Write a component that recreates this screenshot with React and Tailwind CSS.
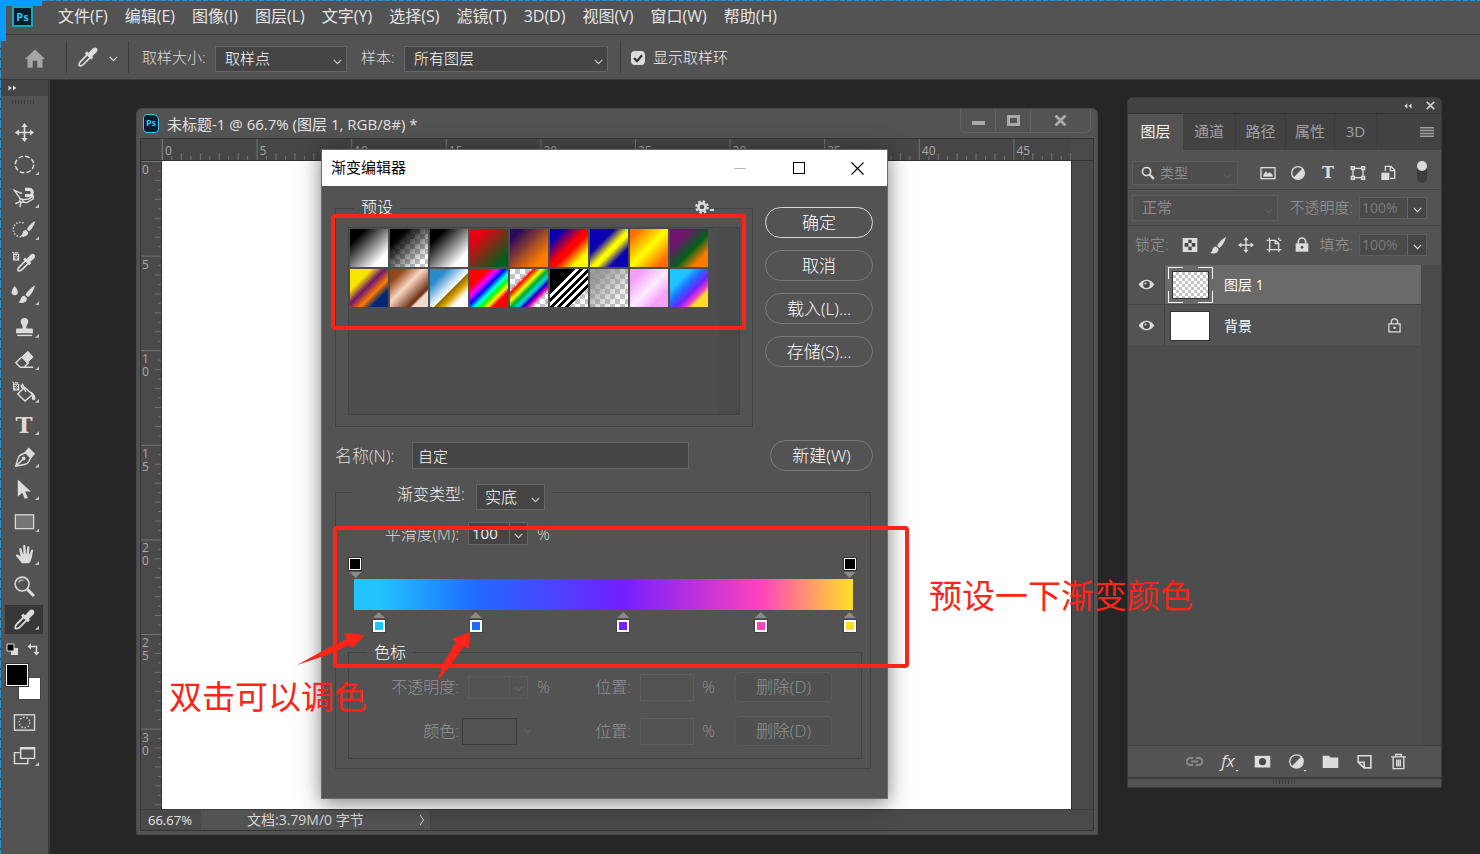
import React, { useState } from 'react'
import clsx from 'clsx'

const checker = 'bg-white bg-[conic-gradient(#c4c4c4_25%,#fff_0_50%,#c4c4c4_0_75%,#fff_0)]'

const menus = ['文件(F)', '编辑(E)', '图像(I)', '图层(L)', '文字(Y)', '选择(S)', '滤镜(T)', '3D(D)', '视图(V)', '窗口(W)', '帮助(H)']

const presets = [
  { name: 'foreground-background', fill: 'bg-[linear-gradient(135deg,#000_20%,#fff_80%)]' },
  { name: 'foreground-transparent', fill: 'bg-[linear-gradient(135deg,#000_22%,#0000_85%)]' },
  { name: 'black-white', fill: 'bg-[linear-gradient(135deg,#000_20%,#fff_80%)]' },
  { name: 'red-green', fill: 'bg-[linear-gradient(135deg,#e60012_20%,#00601b_85%)]' },
  { name: 'violet-orange', fill: 'bg-[linear-gradient(135deg,#290a59_15%,#ff7c00_80%)]' },
  { name: 'blue-red-yellow', fill: 'bg-[linear-gradient(135deg,#0a00b2_18%,#ff0000_48%,#ff0000_56%,#fffc00_80%)]' },
  { name: 'blue-yellow-blue', fill: 'bg-[linear-gradient(135deg,#0a00b2_32%,#fffc00_52%,#fffc00_58%,#0a00b2_76%)]' },
  { name: 'orange-yellow-orange', fill: 'bg-[linear-gradient(135deg,#ff6e02_12%,#ffff00_50%,#ff6d00_85%)]' },
  { name: 'violet-green-orange', fill: 'bg-[linear-gradient(135deg,#6f156c_26%,#00601b_56%,#fd7c00_80%)]' },
  { name: 'yellow-violet-orange-blue', fill: 'bg-[linear-gradient(135deg,#f9e600_28%,#6f156c_46%,#fd7c00_63%,#002874_78%)]' },
  { name: 'copper', fill: 'bg-[linear-gradient(135deg,#97461a_18%,#fbd8c5_44%,#6c2e16_75%,#efdbcd_80%)]' },
  { name: 'chrome', fill: 'bg-[linear-gradient(135deg,#298acc_22%,#fff_54%,#906a00_56%,#d99f00_66%,#fff_80%)]' },
  { name: 'spectrum', fill: 'bg-[linear-gradient(135deg,#f00_24%,#f0f_36%,#00f_46%,#0ff_56%,#0f0_64%,#ff0_72%,#f00_80%)]' },
  { name: 'transparent-rainbow', fill: 'bg-[linear-gradient(135deg,#f000_27%,#f00_32%,#ff0_42%,#0a3_51%,#0dd_60%,#00c_67%,#e0a_74%,#f0a0_80%)]' },
  { name: 'stripes', fill: 'bg-[linear-gradient(135deg,#000_34%,#fff_34%,#fff_39%,#000_39%,#000_44%,#fff_44%,#fff_49%,#000_49%,#000_54%,#fff_54%,#fff_59%,#000_59%,#000_64%,#fff_64%,#fff_69%,#000_69%,#000_74%,#fff0_74%)]' },
  { name: 'neutral', fill: 'bg-[linear-gradient(135deg,#8f8f8fe0_20%,#8f8f8f00_85%)]' },
  { name: 'pink', fill: 'bg-[linear-gradient(135deg,#f4a0f8_18%,#fdebff_52%,#f7a0ff_78%)]' },
  { name: 'custom', fill: 'bg-[linear-gradient(135deg,#21c4ff_27%,#1f6bff_44%,#731fff_59%,#ff42bd_72%,#ffdc2b_78%)]' },
]

const colorStops = [
  { at: 5, color: '#21c4ff' },
  { at: 24.4, color: '#1f6bff' },
  { at: 54, color: '#731fff' },
  { at: 81.5, color: '#ff42bd' },
  { at: 99.3, color: '#ffdc2b' },
]

const opacityStops = [0.3, 99.3]

function Svg({ size = 24, className, children }) {
  return (
    <svg width={size} height={size} viewBox="0 0 24 24" fill="none" className={clsx('shrink-0', className)} aria-hidden="true">
      {children}
    </svg>
  )
}

function Chevron({ className }) {
  return (
    <svg width="9" height="6" viewBox="0 0 9 6" fill="none" stroke="currentColor" strokeWidth="1.2" className={clsx('shrink-0', className)} aria-hidden="true">
      <path d="M0.8 0.8l3.7 3.9 3.7-3.9" />
    </svg>
  )
}

function DropperShape() {
  return (
    <g>
      <path d="M12.500 7.500l4-4.200c1.500-1.600 3.600-2.300 5-1s.9 3.500-.7 5l-4.200 3.900 1.200 1.300-2.300 2.300-7-6.700 2.200-2.300z" fill="currentColor" />
      <path d="M11.300 9.500l-7.200 7.200c-1.200 1.200-2.300 3.600-1.500 4.500s3.300-.1 4.500-1.300l7.200-7.200" stroke="currentColor" strokeWidth="1.900" />
    </g>
  )
}

function BrushShape() {
  return (
    <g fill="currentColor">
      <path d="M23 2.500c-4 2-8.500 6.500-10 9.800l2.600 2.400C18.800 12.500 22 7 23 2.500z" />
      <path d="M12 13.200c-2-.2-3.600 1.200-4 3.300-.3 1.800-1.200 3-2.500 3.700 3.500 1.300 8.800.8 9.200-4.400z" />
    </g>
  )
}

function MoveShape() {
  return <path fill="currentColor" d="M12 2l3.200 4.200h-2.300v4.900h4.900V8.800L22 12l-4.200 3.200v-2.300h-4.900v4.900h2.300L12 22l-3.200-4.200h2.300v-4.900H6.200v2.300L2 12l4.200-3.200v2.300h4.900V6.200H8.800z" />
}

function MiniChecker() {
  return (
    <g transform="translate(-1.500 -1)">
      <path d="M1 2l2 2M3.500 3H7" stroke="currentColor" strokeWidth="1.200" />
      <rect x="1.500" y="4" width="6.500" height="7" fill="currentColor" />
      <path d="M3 5h1.200v1.200H3zM5.400 5h1.200v1.200H5.400zM4.200 6.200h1.200v1.200H4.200zM3 7.400h1.200v1.200H3zM5.400 7.400h1.200v1.200H5.400zM4.200 8.600h1.200v1.200H4.200z" fill="#333" />
    </g>
  )
}

const tools = [
  { name: '移动工具', art: <MoveShape /> },
  { name: '椭圆选框工具', more: true, art: <ellipse cx="12" cy="12" rx="9.600" ry="8.600" stroke="currentColor" strokeWidth="1.500" strokeDasharray="5 2.200" /> },
  {
    name: '磁性套索工具', more: true, art: (
      <g stroke="currentColor" strokeWidth="1.500">
        <path d="M8.500 14.500L1.500 4.500l8 3.500M9.500 14.500l6.500-1 5-3v3l-7 4-4-1M8 16l-5.500 2.500M8.500 17L7 22" />
        <circle cx="8.800" cy="15.300" r="1.700" fill="#535353" />
        <path d="M12.500 3.500h4.500a3.200 3.200 0 0 1 0 6.400h-4.500" strokeWidth="3.200" />
      </g>
    ),
  },
  {
    name: '快速选择工具', more: true, art: (
      <g>
        <path d="M11 5.200a7.500 7.500 0 1 0 1 13" stroke="currentColor" strokeWidth="1.600" strokeDasharray="1.400 1.800" />
        <g transform="translate(3 1) scale(.88)"><BrushShape /></g>
      </g>
    ),
  },
  { name: '背景吸管工具', art: <g><MiniChecker /><g transform="translate(3 1.500) scale(.9)"><DropperShape /></g></g> },
  {
    name: '混合器画笔工具', more: true, art: (
      <g>
        <path d="M-1.500 9.500c0-2.500 3.300-6.500 3.300-6.500s3.300 4 3.300 6.500a3.300 3.300 0 0 1-6.600 0z" fill="currentColor" />
        <BrushShape />
      </g>
    ),
  },
  {
    name: '仿制图章工具', more: true, art: (
      <g fill="currentColor">
        <path d="M12 2a4 4 0 0 1 4 4c0 2-2 3-2 5.500v1.500h5.500c.8 0 1.300.5 1.300 1.300V18H3.200v-3.700c0-.8.5-1.300 1.300-1.300H10v-1.500C10 9 8 8 8 6a4 4 0 0 1 4-4z" />
        <path d="M4.500 19.500h15.500V21h-15.500z" />
      </g>
    ),
  },
  {
    name: '橡皮擦工具', more: true, art: (
      <g>
        <path d="M15.500 3.500L21 9.500 14.500 15.500 9 9.500z" fill="currentColor" stroke="currentColor" />
        <path d="M9 9.500l-6 6 4.500 4.500h4l5-5M7.500 20H21" stroke="currentColor" strokeWidth="1.500" />
      </g>
    ),
  },
  {
    name: '油漆桶工具', more: true, art: (
      <g>
        <MiniChecker />
        <path d="M12 6.500l8.500 7.500-8 7-7.500-7.500z" stroke="currentColor" strokeWidth="1.500" />
        <path d="M13.500 11.500L10 3.500 8.500 5l2 4" stroke="currentColor" strokeWidth="1.500" />
        <path d="M18.500 11c2.800 1.500 5 4.200 5 7.300a1.900 1.900 0 0 1-3.800 0c0-1.800.3-3.300-.7-5z" fill="currentColor" />
      </g>
    ),
  },
  { name: '文字工具', more: true, letter: 'T' },
  {
    name: '钢笔工具', more: true, art: (
      <g stroke="currentColor" strokeWidth="1.500">
        <path d="M3 21c1-4 1.500-7.500 3.500-10.500C8.500 8.500 11.500 8 13.500 7l5 5c-1 2.500-1.700 5-4 6.500-3 1.500-7.500 1.500-11.500 2.500z" />
        <path d="M13 6.500l3.500-3.800 5.500 5.500-3.500 4z" fill="currentColor" />
        <path d="M3 21l7.500-7.500" />
        <circle cx="11" cy="13" r="1.200" fill="currentColor" />
      </g>
    ),
  },
  { name: '路径选择工具', more: true, art: <path d="M5 1.500v18l4.600-4.200L12.500 22l3-1.300-2.900-6.500 6-.2z" fill="currentColor" /> },
  { name: '矩形工具', more: true, art: <rect x="2.500" y="5" width="19" height="14.500" fill="#757575" stroke="currentColor" strokeWidth="1.300" /> },
  {
    name: '抓手工具', more: true, art: (
      <path
        fill="currentColor"
        d="M9.500 21c-1.800-1.500-3-4-5-6-1-1-1.800-1.800-1.200-2.600.7-.9 2-.4 3 .5l1.600 1.400L6.600 6.800c-.3-1.800 1.900-2.200 2.300-.5l1.400 5h.6L10.600 3.600c0-1.900 2.300-1.900 2.400 0l.5 7.400h.6l.7-6.500c.3-1.700 2.500-1.400 2.300.3l-.5 6.900h.6l1.600-4.200c.6-1.500 2.500-.8 2.100.8-.8 3.400-1 5.500-1.600 8-.5 2-1.300 3.300-2.300 4.700z"
      />
    ),
  },
  {
    name: '缩放工具', art: (
      <g stroke="currentColor">
        <circle cx="9.500" cy="9.500" r="7.300" strokeWidth="1.600" />
        <path d="M6 8a4 4 0 0 1 5-2.500" strokeWidth="1.200" />
        <path d="M15 15l6.800 6.800" strokeWidth="3" />
      </g>
    ),
  },
  { name: '吸管工具', more: true, active: true, art: <DropperShape /> },
]

const filters = [
  { name: '像素图层', art: <g><rect x="1.500" y="4" width="21" height="16.500" stroke="currentColor" strokeWidth="2" /><path d="M5 17.500v-3l4-5 3 4 2.500-3 4.500 4.500v2.500z" fill="currentColor" /></g> },
  { name: '调整图层', art: <g><circle cx="12" cy="12" r="9.500" stroke="currentColor" strokeWidth="2" /><path d="M5.300 18.700A9.500 9.500 0 0 0 18.700 5.300z" fill="currentColor" /></g> },
  { name: '文字图层', letter: 'T' },
  {
    name: '形状图层', art: (
      <g>
        <rect x="4.500" y="5" width="15" height="14" stroke="currentColor" strokeWidth="2" />
        <path d="M1 1.500h6.500V8H1zM16.500 1.500H23V8h-6.500zM1 16h6.500v6.500H1zM16.500 16H23v6.500h-6.500z" fill="currentColor" />
        <path d="M3.300 3.800h2v2h-2zM18.700 3.800h2v2h-2zM3.300 18.200h2v2h-2zM18.700 18.200h2v2h-2z" fill="#535353" />
      </g>
    ),
  },
  { name: '智能对象', art: <g><path d="M8 9V2h8.500L22 7.500V20h-7" stroke="currentColor" strokeWidth="2" /><path d="M15.500 2v6.500H22" stroke="currentColor" strokeWidth="2" /><path d="M2 11.500h12v11H2z" fill="currentColor" /></g> },
]

const locks = [
  {
    name: '锁定透明像素', art: (
      <g>
        <rect x="1" y="1.500" width="22" height="21" fill="currentColor" />
        <path d="M9.500 4h5v5h-5zM4 9h5.500v5.500H4zM14.500 9H20v5.500h-5.500zM9.500 14.500h5V20h-5z" fill="#444" />
      </g>
    ),
  },
  { name: '锁定图像像素', art: <g transform="translate(-7 -3.500) scale(1.350)"><BrushShape /></g> },
  { name: '锁定位置', art: <g transform="translate(-2.400 -2.400) scale(1.200)"><MoveShape /></g> },
  { name: '锁定画板', art: <g stroke="currentColor" strokeWidth="2"><path d="M5 1v3M1 5h3M5.500 5H14l5 4.500V19H5.500zM19 1v3M23 5h-3M19 20v3M20 19h3M5 20v3M1 19h3" /><path d="M14 5v5h5" /></g> },
  { name: '锁定全部', art: <g><path d="M6.500 10V7a5.500 5.500 0 0 1 11 0v3" stroke="currentColor" strokeWidth="2.400" /><path d="M2.500 9.500h19V22h-19z" fill="currentColor" /><circle cx="12" cy="15.500" r="2" fill="#444" /></g> },
]

const footer = [
  { name: '链接图层', dim: true, art: <g stroke="currentColor" strokeWidth="2.600"><path d="M10 7H6a5 5 0 0 0 0 10h4M14 7h4a5 5 0 0 1 0 10h-4M7 12h10" /></g> },
  { name: '图层样式', letter: 'fx', more: true },
  { name: '添加蒙版', art: <g><path d="M1 4h22v16.500H1z" fill="currentColor" /><circle cx="12" cy="12.200" r="5" fill="#484848" /></g> },
  { name: '新建调整图层', more: true, art: <g><circle cx="12" cy="12" r="9.500" stroke="currentColor" strokeWidth="1.800" /><path d="M5.300 18.700A9.500 9.500 0 0 0 18.700 5.300z" fill="currentColor" /></g> },
  { name: '新建组', art: <path d="M1 4h9l2 2.500h11V21H1z" fill="currentColor" /> },
  { name: '新建图层', art: <path d="M3 4h18v17h-9.500L3 13zM3 13h8.500v8" stroke="currentColor" strokeWidth="2.200" /> },
  { name: '删除图层', art: <g stroke="currentColor" strokeWidth="2"><path d="M1.500 5.500h21M8 5V2h8v3M4.500 6v16h15V6M9.500 9v10M14.500 9v10M12 9v10" /></g> },
]

function Corner() {
  return <span className="absolute bottom-1 right-1 h-1 w-1 bg-[#c4c4c4] [clip-path:polygon(100%_0,100%_100%,0_100%)]" />
}

function MenuBar() {
  return (
    <nav className="flex h-[35px] items-center border-b border-[#3a3a3a] pb-[2px] pl-3">
      <div className="mr-[25px] flex h-[21px] w-[21px] items-center justify-center border-2 border-[#1ba6bb] bg-[#001e2b] text-[11px] font-bold leading-none text-[#31c5f0]">
        Ps
      </div>
      <div className="flex gap-[17px] text-base leading-6 text-[#e6e6e6]">
        {menus.map((menu) => (
          <button key={menu} type="button" className="whitespace-nowrap">{menu}</button>
        ))}
      </div>
    </nav>
  )
}

function Dropdown({ id, value, className, wrapper, chevron, disabled }) {
  return (
    <div className={clsx('relative shrink-0 border', wrapper)}>
      <select id={id} disabled={disabled} defaultValue={value} aria-label={value} className={clsx('block h-full w-full appearance-none bg-transparent outline-none disabled:opacity-100', className)}>
        <option>{value}</option>
      </select>
      <Chevron className={clsx('pointer-events-none absolute right-1 top-1/2', chevron)} />
    </div>
  )
}

function OptionsBar() {
  const [ring, setRing] = useState(true)

  return (
    <div className="flex h-[45px] items-center whitespace-nowrap border-b border-[#3a3a3a] text-[15px] font-light text-[#dcdcdc]">
      <button type="button" aria-label="主页" className="ml-6 mt-1 text-[#a5a5a5]">
        <Svg size={22}>
          <path d="M12 1.500l11 10.500h-2.800v9.500h-5.700V14h-5v7.500H3.800V12H1z" fill="currentColor" />
        </Svg>
      </button>
      <span className="ml-5 h-8 w-px bg-[#3d3d3d]" />
      <button type="button" aria-label="吸管工具" className="ml-[10px] flex items-center gap-[10px] text-[#dcdcdc]">
        <Svg size={22}><DropperShape /></Svg>
        <Chevron className="mt-1" />
      </button>
      <span className="ml-[10px] h-8 w-px bg-[#3d3d3d]" />
      <label htmlFor="sample-size" className="ml-[13px] w-[73px]">取样大小:</label>
      <Dropdown id="sample-size" value="取样点" wrapper="mt-[3px] h-[26px] w-[132px] border-[#666] bg-[#454545] text-white" className="pl-[9px]" chevron="text-[#c8c8c8]" />
      <label htmlFor="sample-from" className="ml-[14px] w-[43px]">样本:</label>
      <Dropdown id="sample-from" value="所有图层" wrapper="mt-[3px] h-[26px] w-[204px] border-[#666] bg-[#454545] text-white" className="pl-[9px]" chevron="text-[#c8c8c8]" />
      <span className="ml-3 h-8 w-px bg-[#3d3d3d]" />
      <span className="relative ml-[10px] mt-[2px] h-[14px] w-[14px]">
        <input id="ring" type="checkbox" checked={ring} onChange={(e) => setRing(e.target.checked)} className="block h-[14px] w-[14px] appearance-none rounded-sm bg-[#dcdcdc]" />
        {ring && (
          <svg width="14" height="14" viewBox="0 0 14 14" fill="none" className="pointer-events-none absolute inset-0">
            <path d="M3 7l3 3.200 5-6" stroke="#333" strokeWidth="2.200" />
          </svg>
        )}
      </span>
      <label htmlFor="ring" className="ml-2 text-[#f0f0f0]">显示取样环</label>
    </div>
  )
}

function ToolBar() {
  return (
    <aside className="w-[50px] shrink-0 border-r-2 border-[#3a3a3a] bg-[#535353] text-[#dcdcdc]">
      <div className="flex h-4 items-center bg-[#444] pl-2">
        <svg width="9" height="6" viewBox="0 0 9 6" fill="currentColor"><path d="M0.500 0.500L3.800 3 0.500 5.500zM5 0.500L8.300 3 5 5.500z" /></svg>
      </div>
      <div className="mx-auto mb-[14px] mt-1 h-[4px] w-6 bg-[repeating-linear-gradient(90deg,#3e3e3e_0,#3e3e3e_1px,#535353_1px,#535353_3px)]" />
      <div className="flex h-[516px] flex-col items-center justify-between">
        {tools.map((tool) => (
          <button
            key={tool.name}
            type="button"
            aria-label={tool.name}
            className={clsx('relative flex h-[29px] w-[38px] items-center justify-center', tool.active && 'bg-[#383838]')}
          >
            {tool.letter ? (
              <span className="font-['DejaVu_Serif',serif] text-[23px] font-bold leading-none">{tool.letter}</span>
            ) : (
              <Svg size={23} className="overflow-visible">{tool.art}</Svg>
            )}
            {tool.more && <Corner />}
          </button>
        ))}
      </div>
      <div className="flex items-center justify-between pl-[6px] pr-2 pt-[9px]">
        <button type="button" aria-label="默认颜色">
          <svg width="13" height="13" viewBox="0 0 13 13"><path d="M5 5h7v7H5z" fill="#dcdcdc" /><path d="M1 1h7v7H1z" fill="#000" stroke="#dcdcdc" /></svg>
        </button>
        <button type="button" aria-label="切换颜色">
          <svg width="13" height="13" viewBox="0 0 13 13" fill="none" stroke="currentColor" strokeWidth="1.500"><path d="M3 3.500h6.500v6" /><path d="M4 0.500v6L0.500 3.500zM6.500 9h6L9.500 12.500z" fill="currentColor" stroke="none" /></svg>
        </button>
      </div>
      <div className="relative ml-[6px] mt-2 h-9 w-[35px]">
        <button type="button" aria-label="背景色" className="absolute bottom-0 right-0 h-[23px] w-[23px] border border-[#444] bg-white" />
        <button type="button" aria-label="前景色" className="absolute left-0 top-0 h-[22px] w-[22px] border border-white bg-black outline outline-[#333]" />
      </div>
      <div className="mt-2 flex flex-col items-center gap-1">
        <button type="button" aria-label="快速蒙版" className="relative flex h-[29px] w-[38px] items-center justify-center">
          <Svg size={23}>
            <rect x="1.500" y="4" width="21" height="16" stroke="currentColor" strokeWidth="1.400" />
            <circle cx="12" cy="12" r="5.500" stroke="currentColor" strokeWidth="1.400" strokeDasharray="1.500 1.900" />
          </Svg>
        </button>
        <button type="button" aria-label="屏幕模式" className="relative flex h-[29px] w-[38px] items-center justify-center">
          <Svg size={23}>
            <path d="M7 9H1.500v11.500h14V16" stroke="currentColor" strokeWidth="1.500" />
            <path d="M8 4h14.500v11H8zM8 5h14.500" stroke="currentColor" strokeWidth="1.500" />
          </Svg>
          <Corner />
        </button>
      </div>
    </aside>
  )
}

// rulers count in centimetres, one label every five
const RULER_STEP = 94.6
const marks = Array.from({ length: 120 }, (_, i) => i)
const topLabels = [0, 5, 10, 15, 20, 25, 30, 35, 40, 45]
const leftLabels = [0, 5, 10, 15, 20, 25, 30]

function TopRuler() {
  return (
    <svg width="100%" height="22" className="block flex-1 overflow-hidden" aria-hidden="true">
      {marks.map((i) => {
        const x = (i * RULER_STEP) / 10
        const top = i % 10 === 0 ? 0 : i % 2 === 0 ? 14 : 17
        return <path key={i} d={`M${x + 0.5} ${top}V21`} stroke="#747474" />
      })}
      {topLabels.map((label) => (
        <text key={label} x={(label * RULER_STEP) / 5 + 3} y="16" fontSize="12" fill="#a8a8a8">{label}</text>
      ))}
    </svg>
  )
}

function LeftRuler() {
  return (
    <div className="relative w-[21px] shrink-0 overflow-hidden border-r border-[#333]">
      <svg width="21" height="1140" className="absolute left-0 top-0" aria-hidden="true">
        {marks.map((i) => {
          const y = (i * RULER_STEP) / 10
          const left = i % 10 === 0 ? 0 : i % 2 === 0 ? 14 : 17
          return <path key={i} d={`M${left} ${y + 0.5}H21`} stroke="#747474" />
        })}
      </svg>
      {leftLabels.map((label) => (
        <span
          key={label}
          className="absolute left-px w-2 break-all text-[12px] leading-[13px] text-[#a8a8a8]"
          style={{ top: Math.round((label * RULER_STEP) / 5) + 2 }}
        >
          {label}
        </span>
      ))}
    </div>
  )
}

function DocumentWindow() {
  return (
    <section className="absolute bottom-[19px] left-[86px] right-[382px] top-7 flex flex-col rounded-t-md border border-[#474747] bg-[#535353]">
      <header className="flex h-[29px] items-center pl-[6px]">
        <div className="h-[19px] w-4 rounded-sm rounded-tr-md border border-[#35c8ee] bg-[#001e2b] pt-[3px] text-center text-[9px] font-bold leading-none text-[#31c5f0]">
          Ps
        </div>
        <h1 className="ml-2 whitespace-nowrap text-[15px] leading-5 text-[#e2e2e2]">未标题-1 @ 66.7% (图层 1, RGB/8#) *</h1>
        <div className="ml-auto mr-[6px] flex h-6 self-start rounded-b-md border border-t-0 border-[#626262] text-[#aaa]">
          <button type="button" aria-label="最小化文档" className="flex w-[35px] items-center justify-center border-r border-[#626262]">
            <span className="mt-1 h-1 w-[13px] bg-current" />
          </button>
          <button type="button" aria-label="最大化文档" className="flex w-[35px] items-center justify-center border-r border-[#626262]">
            <span className="h-[11px] w-[13px] border-[3px] border-current" />
          </button>
          <button type="button" aria-label="关闭文档" className="flex w-[59px] items-center justify-center">
            <svg width="13" height="11" viewBox="0 0 13 11" stroke="currentColor" strokeWidth="2.800"><path d="M1.500 0.500l10 10M11.500 0.500l-10 10" /></svg>
          </button>
        </div>
      </header>
      <div className="mx-[3px] mb-[3px] flex flex-1 flex-col border border-[#343434] bg-[#4a4a4a]">
        <div className="flex h-[22px] border-b border-[#333] bg-[#464646]">
          <div className="w-[21px] shrink-0 border-r border-dotted border-[#666]" />
          <TopRuler />
          <div className="w-[22px] shrink-0 bg-[#4a4a4a]" />
        </div>
        <div className="flex min-h-0 flex-1">
          <LeftRuler />
          <div className="flex-1 bg-white" />
          <div className="w-[22px] shrink-0 border-l border-[#333]" />
        </div>
        <footer className="flex h-[21px] items-center border-t border-[#3c3c3c] text-[13px] leading-5 text-[#e6e6e6]">
          <span className="w-[60px] pl-[7px]">66.67%</span>
          <div className="flex h-full w-[230px] items-center justify-between border-r border-[#444] bg-[#535353] pl-[46px] pr-[5px] text-[14px] text-[#d6d6d6]">
            <span>文档:3.79M/0 字节</span>
            <svg width="6" height="12" viewBox="0 0 6 12" fill="none" stroke="currentColor"><path d="M1 1l3.500 5L1 11" /></svg>
          </div>
        </footer>
      </div>
    </section>
  )
}

function PillButton({ children, primary, className }) {
  return (
    <button
      type="button"
      className={clsx(
        'h-[31px] shrink-0 rounded-full border text-[17px] leading-6 text-white',
        primary ? 'border-[#d8d8d8]' : 'border-[#7a7a7a]',
        className
      )}
    >
      {children}
    </button>
  )
}

function PresetList() {
  return (
    <fieldset className="relative min-w-0 flex-1 border border-[#434343] pb-[11px] pl-3 pr-3">
      <legend className="ml-[6px] h-6 px-[7px] leading-[22px] text-white">预设</legend>
      <button type="button" aria-label="预设菜单" className="absolute -top-5 right-[38px] flex items-end gap-px bg-[#535353] text-[#dcdcdc]">
        <svg width="14" height="14" viewBox="0 0 14 14" fill="none" stroke="currentColor">
          <circle cx="7" cy="7" r="3.600" strokeWidth="2.600" />
          <circle cx="7" cy="7" r="5.700" strokeWidth="2.200" strokeDasharray="2.400 2.077" />
        </svg>
        <span className="mb-[3px] h-[2px] w-1 bg-current" />
      </button>
      <div className="mt-[7px] flex h-[188px] border border-[#444] bg-[#4e4e4e]">
        <div className="grid flex-1 grid-cols-[repeat(9,38px)] content-start gap-[2px] pl-px pt-px">
          {presets.map((preset) => (
            <button key={preset.name} type="button" aria-label={preset.name} className={clsx('h-[38px] bg-[length:10px_10px]', checker)}>
              <span className={clsx('block h-full w-full', preset.fill)} />
            </button>
          ))}
        </div>
        <div className="w-5 bg-[#4a4a4a]" />
      </div>
    </fieldset>
  )
}

function NumberField({ id, value, disabled, className }) {
  return (
    <span className={clsx('flex shrink-0 border', disabled ? 'border-[#5c5c5c]' : 'border-[#666] bg-[#454545]', className)}>
      <input id={id} defaultValue={value} disabled={disabled} className="min-w-0 flex-1 bg-transparent pl-[3px] outline-none" />
      <button type="button" aria-label="展开" disabled={disabled} className={clsx('flex w-[18px] items-center justify-center border-l', disabled ? 'border-[#5c5c5c] text-[#666]' : 'border-[#666] text-[#d0d0d0]')}>
        <Chevron className="mt-1" />
      </button>
    </span>
  )
}

function GradientBar() {
  return (
    <div className="mt-[13px] pl-[18px] pr-[17px]">
      <div className="relative h-[21px]">
        {opacityStops.map((at) => (
          <button key={at} type="button" aria-label={`不透明度色标 ${at}%`} className="absolute top-0 -ml-[6px] flex flex-col items-center" style={{ left: `${at}%` }}>
            <span className="h-3 w-3 border border-white bg-black outline outline-[#333]" />
            <span className="mt-[2px] h-[6px] w-3 bg-[#8a8a8a] [clip-path:polygon(0_0,100%_0,50%_100%)]" />
          </button>
        ))}
      </div>
      <div className="h-[31px] bg-[linear-gradient(90deg,#21c4ff_5%,#1f6bff_24.4%,#731fff_54%,#ff42bd_81.5%,#ffdc2b_99.3%)]" />
      <div className="relative mt-[2px] h-5">
        {colorStops.map((stop) => (
          <button key={stop.at} type="button" aria-label={`颜色色标 ${stop.color}`} className="absolute top-0 -ml-[6px] flex flex-col items-center" style={{ left: `${stop.at}%` }}>
            <span className="mb-[2px] h-[6px] w-3 bg-[#8a8a8a] [clip-path:polygon(50%_0,100%_100%,0_100%)]" />
            <span className="h-3 w-3 border-2 border-white outline outline-[#444]" style={{ backgroundColor: stop.color }} />
          </button>
        ))}
      </div>
    </div>
  )
}

function StopRow({ id, label, children, className }) {
  return (
    <div className={clsx('flex h-[30px] items-center', className)}>
      <label htmlFor={id} className="w-[110px] shrink-0 text-right">{label}</label>
      {children}
      <label htmlFor={`${id}-position`} className="w-[45px] shrink-0 text-right">位置:</label>
      <input id={`${id}-position`} disabled className="ml-[9px] h-[27px] w-[54px] border border-[#5f5f5f]" />
      <span className="ml-2 w-[14px]">%</span>
      <button type="button" disabled className="ml-[19px] h-[30px] w-[97px] rounded-sm border border-[#5c5c5c] bg-[#505050] text-[17px] leading-6">删除(D)</button>
    </div>
  )
}

function GradientEditor() {
  return (
    <section className="border border-[#6a6a6a] bg-[#535353] pb-[29px] text-base font-light shadow-[0_4px_20px_rgba(0,0,0,0.5)]">
      <header className="flex h-9 items-center bg-white pl-[9px] font-normal text-black">
        <h2 className="pb-[2px] text-[15px]">渐变编辑器</h2>
        <div className="ml-auto flex h-full">
          <button type="button" aria-label="最小化" className="flex w-[59px] items-center justify-center"><span className="h-px w-3 bg-[#b5b5b5]" /></button>
          <button type="button" aria-label="最大化" className="flex w-[59px] items-center justify-center"><span className="h-3 w-3 border border-black" /></button>
          <button type="button" aria-label="关闭" className="flex w-[59px] items-center justify-center">
            <svg width="13" height="13" viewBox="0 0 13 13" stroke="currentColor" strokeWidth="1.200"><path d="M0.500 0.500l12 12M12.500 0.500l-12 12" /></svg>
          </button>
        </div>
      </header>
      <div className="pl-[13px] pr-[14px] pt-[10px]">
        <div className="flex gap-3">
          <PresetList />
          <div className="flex w-[108px] flex-col gap-3 pt-[11px]">
            <PillButton primary>确定</PillButton>
            <PillButton>取消</PillButton>
            <PillButton>载入(L)...</PillButton>
            <PillButton>存储(S)...</PillButton>
          </div>
        </div>
        <div className="mt-[13px] flex items-center">
          <label htmlFor="gradient-name" className="w-[77px] shrink-0 text-[17px] leading-6 text-[#dcdcdc]">名称(N):</label>
          <input id="gradient-name" defaultValue="自定" className="h-[27px] w-[277px] border border-[#666] bg-[#454545] pl-[5px] text-[15px] text-white outline-none" />
          <PillButton className="ml-auto w-[103px]">新建(W)</PillButton>
        </div>
        <fieldset className="mr-[2px] mt-[13px] min-w-0 border border-[#434343] pb-[9px]">
          <legend className="ml-4 flex h-4 w-[200px] items-start pl-[45px]">
            <label htmlFor="gradient-type" className="w-[79px] shrink-0 leading-5 text-[#f0f0f0]">渐变类型:</label>
            <Dropdown id="gradient-type" value="实底" wrapper="h-[26px] w-[69px] border-[#666] bg-[#454545] text-white" className="pl-2" chevron="text-[#c8c8c8]" />
          </legend>
          <div className="mt-[22px] flex h-[23px] items-center text-[#dcdcdc]">
            <label htmlFor="smoothness" className="w-[132px] pr-[9px] text-right">平滑度(M):</label>
            <NumberField id="smoothness" value="100" className="h-[23px] w-[60px] text-[15px] font-normal text-[#f0f0f0]" />
            <span className="ml-[9px]">%</span>
          </div>
          <GradientBar />
          <fieldset className="ml-3 mr-2 mt-[10px] min-w-0 border border-[#434343] pb-3 text-[#929292]">
            <legend className="ml-[18px] h-5 px-[7px] leading-5 text-white">色标</legend>
            <StopRow id="stop-opacity" label="不透明度:" className="mt-[10px]">
              <div className="flex w-[127px] items-center gap-[9px] pl-[9px]">
                <NumberField id="stop-opacity" disabled className="h-[23px] w-[60px]" />
                <span>%</span>
              </div>
            </StopRow>
            <StopRow id="stop-color" label="颜色:" className="mt-[14px]">
              <div className="flex w-[127px] items-center gap-[6px] pl-[3px]">
                <button id="stop-color" type="button" disabled aria-label="颜色" className="h-[27px] w-[55px] border border-[#3c3c3c]" />
                <Chevron className="text-[#636363]" />
              </div>
            </StopRow>
          </fieldset>
        </fieldset>
      </div>
    </section>
  )
}

function Notes() {
  return (
    <div className="pointer-events-none text-[33px] leading-10 text-[#fb2418]">
      <div className="absolute left-[10px] top-[65px] h-[116px] w-[415px] rounded border-4 border-current" />
      <div className="absolute left-3 top-[377px] h-[142px] w-[576px] rounded border-4 border-current" />
      <svg width="180" height="52" viewBox="0 0 180 52" fill="currentColor" className="absolute -left-6 top-[483px]">
        <path d="M0 33L29 17 50 7 47 1 68 3 55 16 52 13 30 23z" />
        <path d="M140 49L148 28 159 10 155 7 173 0 172 17 167 14 153 34z" />
      </svg>
      <p className="absolute -left-[152px] top-[528px] whitespace-nowrap">双击可以调色</p>
      <p className="absolute left-[608px] top-[427px] whitespace-nowrap">预设一下渐变颜色</p>
    </div>
  )
}

function Eye() {
  return (
    <Svg size={17}>
      <path d="M1 12c5-9 17-9 22 0-5 9-17 9-22 0z" fill="#dcdcdc" />
      <circle cx="12" cy="12" r="4.800" fill="#484848" />
      <circle cx="10.500" cy="10.500" r="1.500" fill="#dcdcdc" />
    </Svg>
  )
}

function PanelField({ id, label }) {
  return (
    <>
      <label htmlFor={id} className="ml-auto mr-[6px] font-light text-[#999]">{label}</label>
      <span className="mr-[14px] flex h-[22px] w-[68px] shrink-0 border border-[#5f5f5f] bg-[#4a4a4a]">
        <input id={id} disabled defaultValue="100%" className="min-w-0 flex-1 pl-[2px] text-[14px] text-[#7a7a7a]" />
        <button type="button" aria-label={`${label}展开`} className="flex w-[19px] items-center justify-center border-l border-[#666] bg-[#454545] text-[#dcdcdc]">
          <Chevron className="mt-1" />
        </button>
      </span>
    </>
  )
}

function LayersPanel() {
  return (
    <section className="absolute bottom-[66px] right-[38px] top-[17px] flex w-[315px] flex-col rounded-t-md border border-[#3a3a3a] bg-[#535353] text-[15px] text-[#dcdcdc]">
      <div className="flex h-4 items-center justify-end gap-[14px] rounded-t-md border-b border-[#333] bg-[#424242] pr-[6px]">
        <svg width="8" height="6" viewBox="0 0 8 6" fill="currentColor"><path d="M3.300 0.500L0.300 3l3 2.500zM7.500 0.500L4.500 3l3 2.500z" /></svg>
        <button type="button" aria-label="关闭面板">
          <svg width="9" height="9" viewBox="0 0 9 9" stroke="#c8c8c8" strokeWidth="1.800"><path d="M0.800 0.800l7.400 7.400M8.200 0.800L0.800 8.200" /></svg>
        </button>
      </div>
      <div className="flex h-9 shrink-0 items-stretch bg-[#424242] text-[#a0a0a0]">
        <button type="button" className="w-[55px] bg-[#535353] pb-[2px] text-[#f4f4f4]">图层</button>
        <button type="button" className="w-[53px] border-r border-[#3b3b3b] pb-[2px]">通道</button>
        <button type="button" className="w-[50px] border-r border-[#3b3b3b] pb-[2px]">路径</button>
        <button type="button" className="w-[49px] border-r border-[#3b3b3b] pb-[2px]">属性</button>
        <button type="button" className="w-[42px] border-r border-[#3b3b3b] pb-[2px]">3D</button>
        <button type="button" aria-label="面板菜单" className="ml-auto mr-[7px] flex items-center">
          <svg width="14" height="10" viewBox="0 0 14 10" stroke="currentColor" strokeWidth="1.500"><path d="M0 0.800h14M0 3.600h14M0 6.400h14M0 9.200h14" /></svg>
        </button>
      </div>
      <div className="flex h-10 shrink-0 items-center border-b border-[#424242] pl-1 pt-[6px]">
        <div className="flex h-6 w-[106px] items-center border border-[#5c5c5c] bg-[#4e4e4e] pl-2">
          <Svg size={14}><circle cx="9.500" cy="9.500" r="7" stroke="currentColor" strokeWidth="2.800" /><path d="M15 15l7 7" stroke="currentColor" strokeWidth="4" /></Svg>
          <Dropdown value="类型" disabled wrapper="h-6 flex-1 border-transparent text-[14px] text-[#8c8c8c]" className="pl-1" chevron="text-[#5e5e5e]" />
        </div>
        <div className="ml-[22px] flex gap-[14px]">
          {filters.map((filter) => (
            <button key={filter.name} type="button" aria-label={filter.name} className="flex w-4 items-center justify-center">
              {filter.letter ? <span className="font-['DejaVu_Serif',serif] text-base font-bold leading-none">{filter.letter}</span> : <Svg size={16}>{filter.art}</Svg>}
            </button>
          ))}
        </div>
        <button type="button" aria-label="图层过滤开关" className="ml-auto mr-[14px] h-5 w-[10px] rounded-full bg-[#3d3d3d]">
          <span className="-mt-[12px] block h-[10px] w-[10px] rounded-full bg-[#dcdcdc]" />
        </button>
      </div>
      <div className="flex h-9 shrink-0 items-center border-b border-[#424242] pl-1">
        <Dropdown value="正常" disabled wrapper="h-[26px] w-[146px] border-[#5c5c5c] bg-[#4f4f4f] text-[#8c8c8c]" className="pl-[9px]" chevron="text-[#5e5e5e]" />
        <PanelField id="opacity" label="不透明度:" />
      </div>
      <div className="flex h-[39px] shrink-0 items-center pb-[2px] pl-[7px]">
        <span className="w-[47px] font-light text-[#999]">锁定:</span>
        <div className="flex gap-3">
          {locks.map((lock) => (
            <button key={lock.name} type="button" aria-label={lock.name} className="w-4"><Svg size={16} className="overflow-visible">{lock.art}</Svg></button>
          ))}
        </div>
        <PanelField id="fill" label="填充:" />
      </div>
      <div className="flex min-h-0 flex-1 bg-[#4a4a4a]">
        <ul className="flex-1 bg-[#4d4d4d]">
          <li className="flex h-10 border-b border-[#434343] bg-[#535353]">
            <button type="button" aria-label="隐藏图层 1" className="flex w-[37px] items-center justify-center border-r border-[#434343]"><Eye /></button>
            <div className="flex flex-1 items-center bg-[#6a6a6a] pl-[3px] text-[14px] text-white">
              <div className="relative p-1">
                <svg width="45" height="36" viewBox="0 0 45 36" fill="none" stroke="#fff" className="absolute inset-0"><path d="M0.500 12V0.500H15M30 0.500h14.500V12M0.500 24v11.500H15M30 35.500h14.500V24" /></svg>
                <div className={clsx('h-7 w-[37px] border border-[#333] bg-[length:6px_6px]', checker)} />
              </div>
              <span className="ml-[11px]">图层 1</span>
            </div>
          </li>
          <li className="flex h-[42px] border-b border-[#484848] bg-[#535353]">
            <button type="button" aria-label="隐藏背景" className="flex w-[37px] items-center justify-center border-r border-[#434343]"><Eye /></button>
            <div className="flex flex-1 items-center pl-[5px] pr-[19px] text-[14px] text-white">
              <div className="h-[30px] w-10 border border-[#333] bg-white" />
              <span className="ml-[14px]">背景</span>
              <Svg size={15} className="ml-auto text-[#dcdcdc]">
                <path d="M7 9V6.500a5 5 0 0 1 10 0V9M3 9.500h18v12.500H3z" stroke="currentColor" strokeWidth="2" />
                <circle cx="12" cy="15.500" r="2" fill="currentColor" />
              </Svg>
            </div>
          </li>
        </ul>
        <div className="w-5 bg-[#4a4a4a]" />
      </div>
      <div className="flex h-8 shrink-0 items-center justify-end gap-4 border-t border-[#404040] pr-[34px]">
        {footer.map((item) => (
          <button key={item.name} type="button" aria-label={item.name} className={clsx('relative flex h-[18px] w-[18px] items-center justify-center', item.dim && 'text-[#8a8a8a]')}>
            {item.letter ? <span className="pb-[3px] text-[17px] italic leading-none">{item.letter}</span> : <Svg size={17}>{item.art}</Svg>}
            {item.more && <span className="absolute -bottom-[1px] -right-[2px] h-[2px] w-1 bg-white [clip-path:polygon(0_0,100%_0,50%_100%)]" />}
          </button>
        ))}
      </div>
      <div className="flex h-[10px] shrink-0 justify-center border-t-2 border-[#3c3c3c]">
        <span className="h-[5px] w-6 bg-[repeating-linear-gradient(90deg,#3e3e3e_0,#3e3e3e_1px,#535353_1px,#535353_3px)]" />
      </div>
    </section>
  )
}

function CaptureFrame() {
  return (
    <div className="pointer-events-none" aria-hidden="true">
      <div className="absolute left-0 top-0 h-px w-full bg-[repeating-linear-gradient(90deg,#2f8fcc_0,#2f8fcc_5px,#35617f_5px,#35617f_7px)]" />
      <div className="absolute left-0 top-0 h-full w-px bg-[repeating-linear-gradient(180deg,#2f8fcc_0,#2f8fcc_8px,#2c4f66_8px,#2c4f66_10px)]" />
      <div className="absolute left-0 top-0 h-[6px] w-[42px] bg-[#0a9bff]" />
      <div className="absolute left-0 top-0 h-[41px] w-[6px] bg-[#0a9bff]" />
    </div>
  )
}

export default function App() {
  return (
    <div className="relative flex h-screen flex-col overflow-hidden bg-[#535353] font-['Open_Sans','Noto_Sans_CJK_SC',sans-serif]">
      <MenuBar />
      <OptionsBar />
      <div className="flex min-h-0 flex-1">
        <ToolBar />
        <main className="relative min-w-0 flex-1 bg-[#262626]">
          <DocumentWindow />
          <LayersPanel />
          <div className="absolute left-[271px] top-[69px] w-[567px]">
            <GradientEditor />
            <Notes />
          </div>
        </main>
      </div>
      <CaptureFrame />
    </div>
  )
}
